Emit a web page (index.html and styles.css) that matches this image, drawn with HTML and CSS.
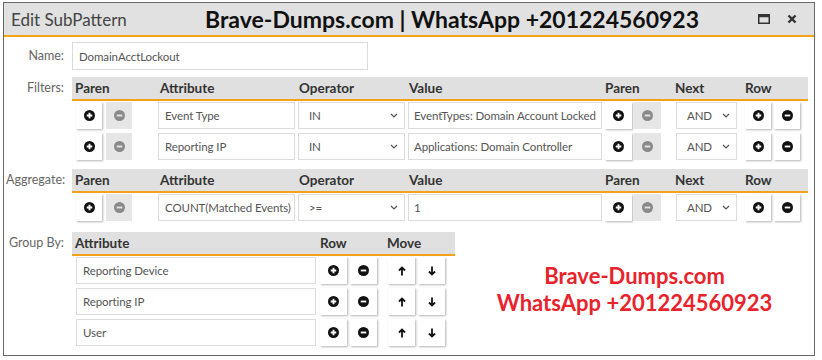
FILE: index.html
```html
<!DOCTYPE html>
<html lang="en">
<head>
  <meta charset="UTF-8">
  <title>Edit SubPattern</title>
  <link rel="stylesheet" href="styles.css">
</head>
<body>
  <div class="window">
    <div class="titlebar">
      <span class="title">Edit SubPattern</span>
      <span class="mark">Brave-Dumps.com | WhatsApp +201224560923</span>
      <span class="win-icons">
        <svg width="12" height="10" viewBox="0 0 12 10"><rect x="0.75" y="0.75" width="10.5" height="8.5" fill="none" stroke="#333" stroke-width="1.5"/><rect x="0.75" y="0.75" width="10.5" height="2.5" fill="#333"/></svg>
        <svg width="10" height="10" viewBox="0 0 10 10"><path d="M1.5 1.5 L8.5 8.5 M8.5 1.5 L1.5 8.5" stroke="#333" stroke-width="2.4"/></svg>
      </span>
    </div>

    <div class="content">
      <div class="section name-section">
        <div class="label">Name:</div>
        <div class="input name-input">DomainAcctLockout</div>
      </div>

      <div class="section filters">
        <div class="label">Filters:</div>
        <div class="table">
          <div class="thead cols7">
            <span>Paren</span><span>Attribute</span><span>Operator</span><span>Value</span><span>Paren</span><span>Next</span><span>Row</span>
          </div>
          <div class="trow cols7">
            <div class="cell c-paren"><button class="btn"><svg class="ico" viewBox="0 0 12 12"><circle cx="6" cy="6" r="6" fill="#111"/><path d="M6 3v6M3 6h6" stroke="#fff" stroke-width="2"/></svg></button><button class="btn off"><svg class="ico" viewBox="0 0 12 12"><circle cx="6" cy="6" r="6" fill="#8a8a8a"/><path d="M3 6h6" stroke="#e6e6e6" stroke-width="2"/></svg></button></div>
            <div class="cell c-attr"><div class="input">Event Type</div></div>
            <div class="cell c-op"><div class="input select">IN<svg class="chev" viewBox="0 0 8 5"><path d="M1 1l3 3 3-3" fill="none" stroke="#555" stroke-width="1.2"/></svg></div></div>
            <div class="cell c-val"><div class="input">EventTypes: Domain Account Locked</div></div>
            <div class="cell c-paren2"><button class="btn"><svg class="ico" viewBox="0 0 12 12"><circle cx="6" cy="6" r="6" fill="#111"/><path d="M6 3v6M3 6h6" stroke="#fff" stroke-width="2"/></svg></button><button class="btn off"><svg class="ico" viewBox="0 0 12 12"><circle cx="6" cy="6" r="6" fill="#8a8a8a"/><path d="M3 6h6" stroke="#e6e6e6" stroke-width="2"/></svg></button></div>
            <div class="cell c-next"><div class="input select">AND<svg class="chev" viewBox="0 0 8 5"><path d="M1 1l3 3 3-3" fill="none" stroke="#555" stroke-width="1.2"/></svg></div></div>
            <div class="cell c-row"><button class="btn"><svg class="ico" viewBox="0 0 12 12"><circle cx="6" cy="6" r="6" fill="#111"/><path d="M6 3v6M3 6h6" stroke="#fff" stroke-width="2"/></svg></button><button class="btn"><svg class="ico" viewBox="0 0 12 12"><circle cx="6" cy="6" r="6" fill="#111"/><path d="M3 6h6" stroke="#fff" stroke-width="2"/></svg></button></div>
          </div>
          <div class="trow cols7">
            <div class="cell c-paren"><button class="btn"><svg class="ico" viewBox="0 0 12 12"><circle cx="6" cy="6" r="6" fill="#111"/><path d="M6 3v6M3 6h6" stroke="#fff" stroke-width="2"/></svg></button><button class="btn off"><svg class="ico" viewBox="0 0 12 12"><circle cx="6" cy="6" r="6" fill="#8a8a8a"/><path d="M3 6h6" stroke="#e6e6e6" stroke-width="2"/></svg></button></div>
            <div class="cell c-attr"><div class="input">Reporting IP</div></div>
            <div class="cell c-op"><div class="input select">IN<svg class="chev" viewBox="0 0 8 5"><path d="M1 1l3 3 3-3" fill="none" stroke="#555" stroke-width="1.2"/></svg></div></div>
            <div class="cell c-val"><div class="input">Applications: Domain Controller</div></div>
            <div class="cell c-paren2"><button class="btn"><svg class="ico" viewBox="0 0 12 12"><circle cx="6" cy="6" r="6" fill="#111"/><path d="M6 3v6M3 6h6" stroke="#fff" stroke-width="2"/></svg></button><button class="btn off"><svg class="ico" viewBox="0 0 12 12"><circle cx="6" cy="6" r="6" fill="#8a8a8a"/><path d="M3 6h6" stroke="#e6e6e6" stroke-width="2"/></svg></button></div>
            <div class="cell c-next"><div class="input select">AND<svg class="chev" viewBox="0 0 8 5"><path d="M1 1l3 3 3-3" fill="none" stroke="#555" stroke-width="1.2"/></svg></div></div>
            <div class="cell c-row"><button class="btn"><svg class="ico" viewBox="0 0 12 12"><circle cx="6" cy="6" r="6" fill="#111"/><path d="M6 3v6M3 6h6" stroke="#fff" stroke-width="2"/></svg></button><button class="btn"><svg class="ico" viewBox="0 0 12 12"><circle cx="6" cy="6" r="6" fill="#111"/><path d="M3 6h6" stroke="#fff" stroke-width="2"/></svg></button></div>
          </div>
        </div>
      </div>

      <div class="section aggregate">
        <div class="label">Aggregate:</div>
        <div class="table">
          <div class="thead cols7">
            <span>Paren</span><span>Attribute</span><span>Operator</span><span>Value</span><span>Paren</span><span>Next</span><span>Row</span>
          </div>
          <div class="trow cols7">
            <div class="cell c-paren"><button class="btn"><svg class="ico" viewBox="0 0 12 12"><circle cx="6" cy="6" r="6" fill="#111"/><path d="M6 3v6M3 6h6" stroke="#fff" stroke-width="2"/></svg></button><button class="btn off"><svg class="ico" viewBox="0 0 12 12"><circle cx="6" cy="6" r="6" fill="#8a8a8a"/><path d="M3 6h6" stroke="#e6e6e6" stroke-width="2"/></svg></button></div>
            <div class="cell c-attr"><div class="input">COUNT(Matched Events)</div></div>
            <div class="cell c-op"><div class="input select">&gt;=<svg class="chev" viewBox="0 0 8 5"><path d="M1 1l3 3 3-3" fill="none" stroke="#555" stroke-width="1.2"/></svg></div></div>
            <div class="cell c-val"><div class="input">1</div></div>
            <div class="cell c-paren2"><button class="btn"><svg class="ico" viewBox="0 0 12 12"><circle cx="6" cy="6" r="6" fill="#111"/><path d="M6 3v6M3 6h6" stroke="#fff" stroke-width="2"/></svg></button><button class="btn off"><svg class="ico" viewBox="0 0 12 12"><circle cx="6" cy="6" r="6" fill="#8a8a8a"/><path d="M3 6h6" stroke="#e6e6e6" stroke-width="2"/></svg></button></div>
            <div class="cell c-next"><div class="input select">AND<svg class="chev" viewBox="0 0 8 5"><path d="M1 1l3 3 3-3" fill="none" stroke="#555" stroke-width="1.2"/></svg></div></div>
            <div class="cell c-row"><button class="btn"><svg class="ico" viewBox="0 0 12 12"><circle cx="6" cy="6" r="6" fill="#111"/><path d="M6 3v6M3 6h6" stroke="#fff" stroke-width="2"/></svg></button><button class="btn"><svg class="ico" viewBox="0 0 12 12"><circle cx="6" cy="6" r="6" fill="#111"/><path d="M3 6h6" stroke="#fff" stroke-width="2"/></svg></button></div>
          </div>
        </div>
      </div>

      <div class="section groupby">
        <div class="label">Group By:</div>
        <div class="table">
          <div class="thead cols3">
            <span>Attribute</span><span>Row</span><span>Move</span>
          </div>
          <div class="trow cols3">
            <div class="cell g-attr"><div class="input">Reporting Device</div></div>
            <div class="cell g-row"><button class="btn"><svg class="ico" viewBox="0 0 12 12"><circle cx="6" cy="6" r="6" fill="#111"/><path d="M6 3v6M3 6h6" stroke="#fff" stroke-width="2"/></svg></button><button class="btn"><svg class="ico" viewBox="0 0 12 12"><circle cx="6" cy="6" r="6" fill="#111"/><path d="M3 6h6" stroke="#fff" stroke-width="2"/></svg></button></div>
            <div class="cell g-move"><button class="btn"><svg class="arrow" viewBox="0 0 8 10"><path d="M4 9.5V1.5M1 4.5l3-3 3 3" fill="none" stroke="#111" stroke-width="1.8"/></svg></button><button class="btn"><svg class="arrow" viewBox="0 0 8 10"><path d="M4 0.5v8M1 5.5l3 3 3-3" fill="none" stroke="#111" stroke-width="1.8"/></svg></button></div>
          </div>
          <div class="trow cols3">
            <div class="cell g-attr"><div class="input">Reporting IP</div></div>
            <div class="cell g-row"><button class="btn"><svg class="ico" viewBox="0 0 12 12"><circle cx="6" cy="6" r="6" fill="#111"/><path d="M6 3v6M3 6h6" stroke="#fff" stroke-width="2"/></svg></button><button class="btn"><svg class="ico" viewBox="0 0 12 12"><circle cx="6" cy="6" r="6" fill="#111"/><path d="M3 6h6" stroke="#fff" stroke-width="2"/></svg></button></div>
            <div class="cell g-move"><button class="btn"><svg class="arrow" viewBox="0 0 8 10"><path d="M4 9.5V1.5M1 4.5l3-3 3 3" fill="none" stroke="#111" stroke-width="1.8"/></svg></button><button class="btn"><svg class="arrow" viewBox="0 0 8 10"><path d="M4 0.5v8M1 5.5l3 3 3-3" fill="none" stroke="#111" stroke-width="1.8"/></svg></button></div>
          </div>
          <div class="trow cols3">
            <div class="cell g-attr"><div class="input">User</div></div>
            <div class="cell g-row"><button class="btn"><svg class="ico" viewBox="0 0 12 12"><circle cx="6" cy="6" r="6" fill="#111"/><path d="M6 3v6M3 6h6" stroke="#fff" stroke-width="2"/></svg></button><button class="btn"><svg class="ico" viewBox="0 0 12 12"><circle cx="6" cy="6" r="6" fill="#111"/><path d="M3 6h6" stroke="#fff" stroke-width="2"/></svg></button></div>
            <div class="cell g-move"><button class="btn"><svg class="arrow" viewBox="0 0 8 10"><path d="M4 9.5V1.5M1 4.5l3-3 3 3" fill="none" stroke="#111" stroke-width="1.8"/></svg></button><button class="btn"><svg class="arrow" viewBox="0 0 8 10"><path d="M4 0.5v8M1 5.5l3 3 3-3" fill="none" stroke="#111" stroke-width="1.8"/></svg></button></div>
          </div>
        </div>
        <div class="red-mark">
          <div>Brave-Dumps.com</div>
          <div>WhatsApp +201224560923</div>
        </div>
      </div>
    </div>
  </div>
</body>
</html>
```

FILE: styles.css
```css
body {
  margin: 0;
  background-color: #fff;
  font-family: Lato, 'Open Sans', sans-serif;
  color: #555;
}

.window {
  margin: 2px 0 0 3px;
  width: 812px;
  height: 354px;
  border: 1.5px solid #6a6a6a;
  box-sizing: border-box;
  background-color: #fff;
  overflow: hidden;
}

.titlebar {
  display: flex;
  align-items: center;
  height: 32px;
  background-color: #e1e1e1;
  border-bottom: 2px solid #f5a21b;
}

.title {
  font-size: 17px;
  color: #444;
  padding-left: 7px;
  width: 194px;
}

.mark {
  font-family: Lato, sans-serif;
  font-weight: bold;
  font-size: 23px;
  color: #111;
  flex: 1;
}

.win-icons {
  display: flex;
  align-items: center;
  gap: 17px;
  padding-right: 17px;
}

.content {
  padding-top: 5px;
}

.section {
  display: flex;
  align-items: flex-start;
}

.label {
  width: 58px;
  padding-left: 2px;
  text-align: right;
  font-size: 12.5px;
  color: #666;
  padding-right: 8px;
  line-height: 22px;
  white-space: nowrap;
}

.name-section .label {
  line-height: 28px;
}

.name-section {
  margin-bottom: 7px;
}

.filters {
  margin-bottom: 5px;
}

.aggregate {
  margin-bottom: 7px;
}

.input {
  box-sizing: border-box;
  height: 27px;
  background-color: #fff;
  border: 1px solid #dcdcdc;
  font-size: 11.5px;
  letter-spacing: -0.1px;
  color: #555;
  padding-left: 6px;
  display: flex;
  align-items: center;
  white-space: nowrap;
  overflow: hidden;
}

.name-input {
  width: 296px;
  height: 28px;
}

.select {
  justify-content: space-between;
  padding: 0 6px 0 10px;
}

.chev {
  width: 8px;
  height: 5px;
}

.thead {
  height: 22px;
  background-color: #e0e0e0;
  border-bottom: 2px solid #f5a21b;
  margin-bottom: 1px;
}

.thead span {
  font-weight: bold;
  font-size: 13.5px;
  color: #333;
  line-height: 22px;
  padding-left: 3px;
}

.trow {
  height: 27px;
  margin-bottom: 4px;
}

.cols7 {
  display: grid;
  grid-template-columns: 85px 139px 110px 196px 70px 70px 66px;
}

.cols3 {
  display: grid;
  grid-template-columns: 245px 67px 71px;
}

.cell {
  display: flex;
  align-items: stretch;
}

.c-paren { padding-left: 4px; gap: 4px; }
.c-attr { padding-left: 1px; }
.c-attr .input { width: 137px; }
.c-op { padding-left: 2px; }
.c-op .input { width: 107px; }
.c-val { padding-left: 2px; }
.c-val .input { width: 194px; padding-left: 5px; }
.c-paren2 { padding-left: 3px; gap: 2px; }
.c-next { padding-left: 4px; }
.c-next .input { width: 61px; }
.c-row { padding-left: 3px; gap: 3px; }

.g-attr { padding-left: 4px; }
.g-attr .input { width: 240px; }
.g-row { padding-left: 3px; gap: 3px; }
.g-move { padding-left: 4px; gap: 3px; }

.btn {
  width: 27px;
  height: 27px;
  padding: 0;
  border: none;
  background-color: #fff;
  box-shadow: 1px 1px 2px rgba(0, 0, 0, 0.3);
  display: flex;
  align-items: center;
  justify-content: center;
}

.btn.off {
  background-color: #e6e6e6;
  box-shadow: none;
}

.c-paren .btn,
.c-row .btn {
  width: 26px;
}

.ico {
  width: 11px;
  height: 11px;
}

.arrow {
  width: 8px;
  height: 10px;
}

.red-mark {
  flex: 1;
  padding-top: 30px;
  text-align: center;
  font-weight: bold;
  font-size: 22px;
  line-height: 27px;
  color: #e8232c;
}
```
